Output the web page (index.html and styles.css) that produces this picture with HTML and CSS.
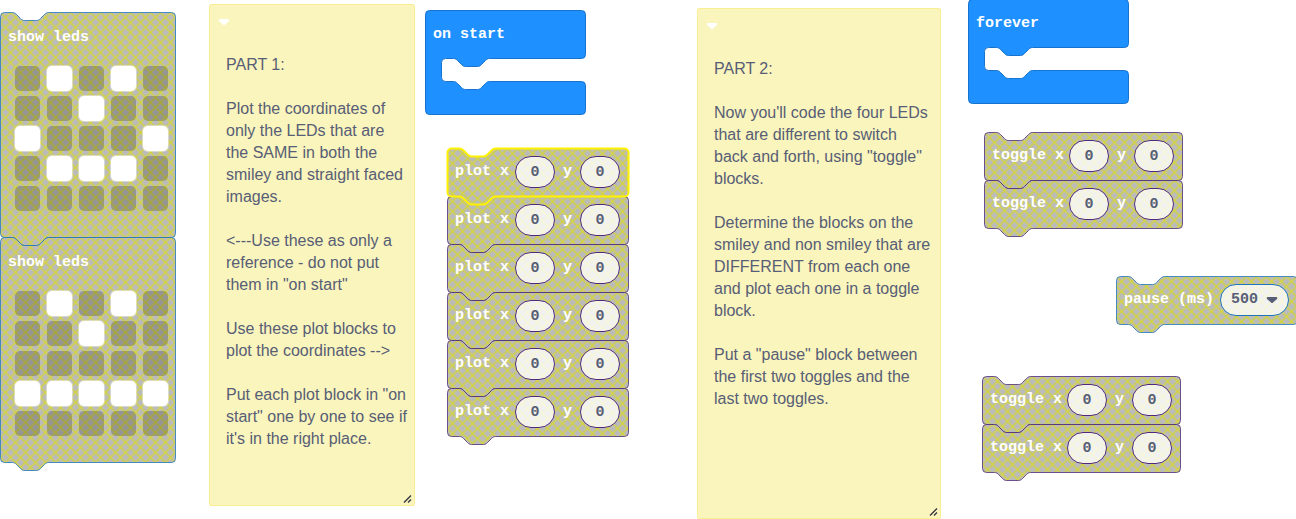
FILE: index.html
```html
<!DOCTYPE html>
<html lang="en">
<head>
<meta charset="utf-8">
<title>Block workspace</title>
<link rel="stylesheet" href="styles.css">
</head>
<body>
<svg class="defs" aria-hidden="true">
  <defs>
    <pattern id="hatch" patternUnits="userSpaceOnUse" width="10" height="10">
      <rect width="10" height="10" fill="#aaa"/>
      <path d="M0 0L10 10M10 0L0 10" stroke="#cc0" stroke-width="1.300" stroke-linecap="square"/>
    </pattern>
    <path id="plot" transform="translate(.5 .5)" d="M0 4a4 4 0 0 1 4-4H12c2 0 3 1 4 2l4 4c1 1 2 2 4 2h12c2 0 3-1 4-2l4-4c1-1 2-2 4-2H177a4 4 0 0 1 4 4V44a4 4 0 0 1-4 4H48c-2 0-3 1-4 2l-4 4c-1 1-2 2-4 2H24c-2 0-3-1-4-2l-4-4c-1-1-2-2-4-2H4a4 4 0 0 1-4-4z"/>
    <path id="toggle" transform="translate(.5 .5)" d="M0 4a4 4 0 0 1 4-4H12c2 0 3 1 4 2l4 4c1 1 2 2 4 2h12c2 0 3-1 4-2l4-4c1-1 2-2 4-2H194a4 4 0 0 1 4 4V44a4 4 0 0 1-4 4H48c-2 0-3 1-4 2l-4 4c-1 1-2 2-4 2H24c-2 0-3-1-4-2l-4-4c-1-1-2-2-4-2H4a4 4 0 0 1-4-4z"/>
    <path id="leds" transform="translate(.5 .5)" d="M0 4a4 4 0 0 1 4-4H12c2 0 3 1 4 2l4 4c1 1 2 2 4 2h12c2 0 3-1 4-2l4-4c1-1 2-2 4-2H171a4 4 0 0 1 4 4V221a4 4 0 0 1-4 4H48c-2 0-3 1-4 2l-4 4c-1 1-2 2-4 2H24c-2 0-3-1-4-2l-4-4c-1-1-2-2-4-2H4a4 4 0 0 1-4-4z"/>
    <path id="event" transform="translate(.5 .5)" d="M0 4a4 4 0 0 1 4-4H156a4 4 0 0 1 4 4V44a4 4 0 0 1-4 4H64c-2 0-3 1-4 2l-4 4c-1 1-2 2-4 2H40c-2 0-3-1-4-2l-4-4c-1-1-2-2-4-2H20a4 4 0 0 0-4 4V67a4 4 0 0 0 4 4H28c2 0 3 1 4 2l4 4c1 1 2 2 4 2h12c2 0 3-1 4-2l4-4c1-1 2-2 4-2H156a4 4 0 0 1 4 4V100a4 4 0 0 1-4 4H4a4 4 0 0 1-4-4z"/>
  </defs>
</svg>

<main class="workspace">
  <section class="stack at-leds">
    <div class="block leds-block basic">
      <svg class="shape"><use href="#leds"/></svg>
      <span class="label">show leds</span>
      <div class="grid">
        <input type="checkbox" class="led" aria-label="LED 0,0"><input type="checkbox" class="led" aria-label="LED 1,0" checked><input type="checkbox" class="led" aria-label="LED 2,0"><input type="checkbox" class="led" aria-label="LED 3,0" checked><input type="checkbox" class="led" aria-label="LED 4,0">
        <input type="checkbox" class="led" aria-label="LED 0,1"><input type="checkbox" class="led" aria-label="LED 1,1"><input type="checkbox" class="led" aria-label="LED 2,1" checked><input type="checkbox" class="led" aria-label="LED 3,1"><input type="checkbox" class="led" aria-label="LED 4,1">
        <input type="checkbox" class="led" aria-label="LED 0,2" checked><input type="checkbox" class="led" aria-label="LED 1,2"><input type="checkbox" class="led" aria-label="LED 2,2"><input type="checkbox" class="led" aria-label="LED 3,2"><input type="checkbox" class="led" aria-label="LED 4,2" checked>
        <input type="checkbox" class="led" aria-label="LED 0,3"><input type="checkbox" class="led" aria-label="LED 1,3" checked><input type="checkbox" class="led" aria-label="LED 2,3" checked><input type="checkbox" class="led" aria-label="LED 3,3" checked><input type="checkbox" class="led" aria-label="LED 4,3">
        <input type="checkbox" class="led" aria-label="LED 0,4"><input type="checkbox" class="led" aria-label="LED 1,4"><input type="checkbox" class="led" aria-label="LED 2,4"><input type="checkbox" class="led" aria-label="LED 3,4"><input type="checkbox" class="led" aria-label="LED 4,4">
      </div>
    </div>
    <div class="block leds-block basic">
      <svg class="shape"><use href="#leds"/></svg>
      <span class="label">show leds</span>
      <div class="grid">
        <input type="checkbox" class="led" aria-label="LED 0,0"><input type="checkbox" class="led" aria-label="LED 1,0" checked><input type="checkbox" class="led" aria-label="LED 2,0"><input type="checkbox" class="led" aria-label="LED 3,0" checked><input type="checkbox" class="led" aria-label="LED 4,0">
        <input type="checkbox" class="led" aria-label="LED 0,1"><input type="checkbox" class="led" aria-label="LED 1,1"><input type="checkbox" class="led" aria-label="LED 2,1" checked><input type="checkbox" class="led" aria-label="LED 3,1"><input type="checkbox" class="led" aria-label="LED 4,1">
        <input type="checkbox" class="led" aria-label="LED 0,2"><input type="checkbox" class="led" aria-label="LED 1,2"><input type="checkbox" class="led" aria-label="LED 2,2"><input type="checkbox" class="led" aria-label="LED 3,2"><input type="checkbox" class="led" aria-label="LED 4,2">
        <input type="checkbox" class="led" aria-label="LED 0,3" checked><input type="checkbox" class="led" aria-label="LED 1,3" checked><input type="checkbox" class="led" aria-label="LED 2,3" checked><input type="checkbox" class="led" aria-label="LED 3,3" checked><input type="checkbox" class="led" aria-label="LED 4,3" checked>
        <input type="checkbox" class="led" aria-label="LED 0,4"><input type="checkbox" class="led" aria-label="LED 1,4"><input type="checkbox" class="led" aria-label="LED 2,4"><input type="checkbox" class="led" aria-label="LED 3,4"><input type="checkbox" class="led" aria-label="LED 4,4">
      </div>
    </div>
  </section>

  <section class="note note-one">
    <header class="note-bar">
      <button class="collapse" type="button" aria-label="Collapse note"><svg width="12" height="8"><path d="M2 1H10Q12 1 11 3L7 6.500Q6 7.500 5 6.500L1 3Q0 1 2 1z" fill="#fff"/></svg></button>
    </header>
    <textarea class="note-text" aria-label="Part 1 note" spellcheck="false">PART 1:

Plot the coordinates of only the LEDs that are the SAME in both the smiley and straight faced images.

&lt;---Use these as only a reference - do not put them in "on start"

Use these plot blocks to plot the coordinates --&gt;

Put each plot block in "on start" one by one to see if it's in the right place.</textarea>
    <svg class="grip" width="10" height="10" aria-hidden="true"><path d="M1 8.500L8 1.500M5 8.500L8 5.500" stroke="#33333d" stroke-width="1.300" fill="none"/></svg>
  </section>

  <section class="block event at-start">
    <svg class="shape"><use href="#event"/></svg>
    <span class="label">on start</span>
  </section>

  <section class="stack at-plots">
    <div class="block plot selected">
      <svg class="shape"><use href="#plot"/></svg>
      <span class="label grow">plot x</span><input class="slot" value="0" aria-label="x"><span class="label">y</span><input class="slot" value="0" aria-label="y">
    </div>
    <div class="block plot">
      <svg class="shape"><use href="#plot"/></svg>
      <span class="label grow">plot x</span><input class="slot" value="0" aria-label="x"><span class="label">y</span><input class="slot" value="0" aria-label="y">
    </div>
    <div class="block plot">
      <svg class="shape"><use href="#plot"/></svg>
      <span class="label grow">plot x</span><input class="slot" value="0" aria-label="x"><span class="label">y</span><input class="slot" value="0" aria-label="y">
    </div>
    <div class="block plot">
      <svg class="shape"><use href="#plot"/></svg>
      <span class="label grow">plot x</span><input class="slot" value="0" aria-label="x"><span class="label">y</span><input class="slot" value="0" aria-label="y">
    </div>
    <div class="block plot">
      <svg class="shape"><use href="#plot"/></svg>
      <span class="label grow">plot x</span><input class="slot" value="0" aria-label="x"><span class="label">y</span><input class="slot" value="0" aria-label="y">
    </div>
    <div class="block plot">
      <svg class="shape"><use href="#plot"/></svg>
      <span class="label grow">plot x</span><input class="slot" value="0" aria-label="x"><span class="label">y</span><input class="slot" value="0" aria-label="y">
    </div>
  </section>

  <section class="note note-two">
    <header class="note-bar">
      <button class="collapse" type="button" aria-label="Collapse note"><svg width="12" height="8"><path d="M2 1H10Q12 1 11 3L7 6.500Q6 7.500 5 6.500L1 3Q0 1 2 1z" fill="#fff"/></svg></button>
    </header>
    <textarea class="note-text" aria-label="Part 2 note" spellcheck="false">PART 2:

Now you'll code the four LEDs that are different to switch back and forth, using "toggle" blocks.

Determine the blocks on the smiley and non smiley that are DIFFERENT from each one and plot each one in a toggle block.

Put a "pause" block between the first two toggles and the last two toggles.</textarea>
    <svg class="grip" width="10" height="10" aria-hidden="true"><path d="M1 8.500L8 1.500M5 8.500L8 5.500" stroke="#33333d" stroke-width="1.300" fill="none"/></svg>
  </section>

  <section class="block event at-forever">
    <svg class="shape"><use href="#event"/></svg>
    <span class="label">forever</span>
  </section>

  <section class="stack at-toggles-a">
    <div class="block toggle">
      <svg class="shape"><use href="#toggle"/></svg>
      <span class="label grow">toggle x</span><input class="slot" value="0" aria-label="x"><span class="label">y</span><input class="slot" value="0" aria-label="y">
    </div>
    <div class="block toggle">
      <svg class="shape"><use href="#toggle"/></svg>
      <span class="label grow">toggle x</span><input class="slot" value="0" aria-label="x"><span class="label">y</span><input class="slot" value="0" aria-label="y">
    </div>
  </section>

  <section class="block plot basic at-pause">
    <svg class="shape"><use href="#plot"/></svg>
    <label class="label grow" for="pause-ms">pause (ms)</label>
    <span class="picker">
      <select class="slot" id="pause-ms"><option>500</option></select>
      <svg class="arrow" width="12" height="8" aria-hidden="true"><path d="M2 1H10Q12 1 11 3L7 6.500Q6 7.500 5 6.500L1 3Q0 1 2 1z" fill="#575e75"/></svg>
    </span>
  </section>

  <section class="stack at-toggles-b">
    <div class="block toggle">
      <svg class="shape"><use href="#toggle"/></svg>
      <span class="label grow">toggle x</span><input class="slot" value="0" aria-label="x"><span class="label">y</span><input class="slot" value="0" aria-label="y">
    </div>
    <div class="block toggle">
      <svg class="shape"><use href="#toggle"/></svg>
      <span class="label grow">toggle x</span><input class="slot" value="0" aria-label="x"><span class="label">y</span><input class="slot" value="0" aria-label="y">
    </div>
  </section>
</main>
</body>
</html>
```
FILE: styles.css
```css
* { box-sizing: border-box; }

body {
  margin: 0;
  background: #fff;
  font-family: "Liberation Sans", Arial, sans-serif;
}

.defs { position: absolute; width: 0; height: 0; }

/* Free canvas: stacks and notes sit where they were dropped */
.workspace {
  position: relative;
  min-height: 100vh;
  overflow: hidden;
}

.stack, .note, .at-start, .at-forever, .at-pause { position: absolute; }
.at-leds { left: 0; top: 12px; }
.at-start { left: 425px; top: 10px; }
.at-plots { left: 447px; top: 148px; }
.at-forever { left: 968px; top: -1px; }
.at-toggles-a { left: 984px; top: 132px; }
.at-pause { left: 1116px; top: 276px; }
.at-toggles-b { left: 982px; top: 376px; }

.stack { display: flex; flex-direction: column; }

/* Blocks */
.block {
  --edge: #4f2a7d;
  display: flex;
  align-items: center;
  gap: 8px;
  padding: 8px;
}
.stack .block { position: relative; }
.basic { --edge: #1f74bd; }
.plot { width: 181px; height: 48px; }
.toggle { width: 198px; height: 48px; }

.shape {
  position: absolute;
  left: 0;
  top: 0;
  width: 100%;
  height: 100%;
  overflow: visible;
  fill: url(#hatch);
  fill-opacity: .8;
  stroke: var(--edge);
  stroke-opacity: .8;
  pointer-events: none;
}
.selected { z-index: 1; }
.selected .shape { stroke: #fff200; stroke-width: 2px; stroke-opacity: 1; }

.label {
  position: relative;
  color: #fff;
  font: bold 15px/16px "Liberation Mono", monospace;
  white-space: nowrap;
}
.grow { flex: 1 1 0; min-width: 0; }

.slot {
  position: relative;
  width: 40px;
  height: 32px;
  padding: 0;
  border: 1px solid var(--edge);
  border-radius: 16px;
  background: rgba(255, 255, 255, .8);
  color: #575e75;
  font: bold 15px/16px "Liberation Mono", monospace;
  text-align: center;
  appearance: none;
}
.picker { position: relative; display: flex; }
.picker .slot { width: 69px; padding: 0 0 0 10px; text-align: left; }
.arrow { position: absolute; right: 11px; top: 12px; pointer-events: none; }

.event {
  width: 161px;
  height: 105px;
  align-items: flex-start;
  padding-top: 17px;
}
.event .shape { fill: #1e90ff; fill-opacity: 1; stroke: #1873cc; stroke-opacity: 1; }

.leds-block {
  width: 176px;
  height: 225px;
  flex-direction: column;
  align-items: flex-start;
  gap: 20px;
  padding-top: 18px;
}
.grid {
  position: relative;
  display: grid;
  grid-template-columns: repeat(5, 25px);
  gap: 5px 7px;
  padding-left: 7px;
}
.led {
  width: 25px;
  height: 25px;
  margin: 0;
  border-radius: 5px;
  background: rgba(0, 0, 0, .2);
  appearance: none;
}
.led:checked { background: #fff; box-shadow: 0 0 0 1px rgba(255, 255, 255, .4); }

/* Notes */
.note {
  display: flex;
  flex-direction: column;
  border: 1px solid #f9ee94;
  border-radius: 2px;
  background: #faf4bd;
}
.note-one { left: 209px; top: 4px; width: 206px; height: 502px; }
.note-two { left: 697px; top: 8px; width: 244px; height: 511px; }
.note-bar { display: flex; height: 33px; padding: 13px 8px 12px; }
.collapse { display: flex; padding: 0; border: 0; background: none; }
.note-text {
  flex: 1;
  margin: 0;
  padding: 16px 6px 0 16px;
  border: 0;
  background: none;
  color: #575e75;
  font: 16px/22px "Liberation Sans", Arial, sans-serif;
  overflow: hidden;
  resize: none;
}
.grip { position: absolute; right: 1px; bottom: 1px; }
```
